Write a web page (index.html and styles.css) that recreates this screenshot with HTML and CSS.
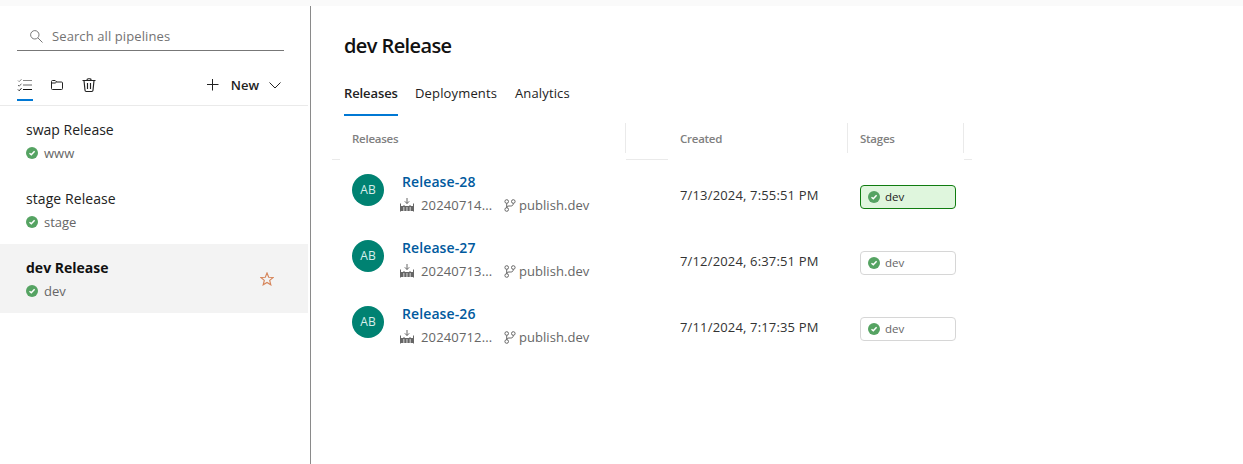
FILE: index.html
```html
<!DOCTYPE html>
<html lang="en">
<head>
<meta charset="utf-8">
<title>dev Release - Pipelines</title>
<link rel="stylesheet" href="styles.css">
</head>
<body>
<svg class="defs" width="0" height="0" aria-hidden="true">
  <symbol id="ok" viewBox="0 0 12 12"><circle cx="6" cy="6" r="6" fill="#55a362"/><path d="M3.500 6.200 5.300 7.800 8.600 4.300" fill="none" stroke="#fff" stroke-width="1.500"/></symbol>
  <symbol id="build" viewBox="0 0 14 14"><path d="M7 0v5.500M4.800 3.300 7 5.500l2.200-2.200M.5 5.500v8M13.500 5.500v8" fill="none" stroke="#666"/><path d="M0 8h3.500V7h1v1h5V7h1v1H14v5H0z" fill="#666"/><path d="M3 10h1.500M6.200 10h1.500M9.500 10H11M3 12h1.500M6.200 12h1.500M9.500 12H11" stroke="#fff"/></symbol>
  <symbol id="branch" viewBox="0 0 12 13"><g fill="none" stroke="#666" stroke-width="1"><circle cx="2.700" cy="2.500" r="1.800"/><circle cx="9.300" cy="2.500" r="1.800"/><circle cx="2.700" cy="10.500" r="1.800"/><path d="M2.700 4.300v4.400M9.300 4.300c0 2-1 2.700-2.600 2.700H5C3.500 7 2.700 7.700 2.700 8.700"/></g></symbol>
</svg>
<div class="topstrip"></div>
<div class="app">
  <aside class="sidebar">
    <div class="search">
      <svg width="13" height="13" viewBox="0 0 13 13" fill="none" stroke="#777"><circle cx="4.800" cy="4.800" r="4.200"/><path d="m7.900 7.900 4.600 4.600"/></svg>
      <span class="t-search">Search all pipelines</span>
    </div>
    <div class="toolbar">
      <span class="view active"><svg width="16" height="14" viewBox="0 0 16 14" fill="none"><path d="M6 2.500h9M1 2.500l1.200 1.200L4.500 1.200" stroke="#888"/><path d="M6 7h9M1 7l1.200 1.200L4.500 5.700" stroke="#666"/><path d="M6 11.500h9M1 11.500l1.200 1.200 2.300-2.500" stroke="#111"/></svg></span>
      <span class="view"><svg width="14" height="12" viewBox="0 0 14 12" fill="none" stroke="#222"><path d="M1.500 2.500q0-1 1-1h2.700l1.500 1.500h4.800q1 0 1 1v5.500q0 1-1 1h-9q-1 0-1-1zM1.500 4h3.700L6.700 3"/></svg></span>
      <span class="view"><svg width="14" height="15" viewBox="0 0 14 15" fill="none" stroke="#222" stroke-width="1.150"><path d="M.5 2.500h13M5 2.500V2q0-1.300 1.300-1.300h1.400Q9 .7 9 2v.5M2 2.500l1 9.800q.1 1.200 1.300 1.200h5.400q1.200 0 1.300-1.200l1-9.800M5.500 5v6M8.500 5v6"/></svg></span>
      <span class="new"><svg width="12" height="12" viewBox="0 0 12 12" stroke="#222"><path d="M5.500 0v11.500M0 5.500h11.500"/></svg><b class="t-new">New</b><svg width="12" height="7" viewBox="0 0 12 7" fill="none" stroke="#222"><path d="m.5.5 5.500 5.500L11.500.5"/></svg></span>
    </div>
    <div class="item"><div class="name">swap Release</div><div class="env"><svg width="12" height="12"><use href="#ok"/></svg><span>www</span></div></div>
    <div class="item"><div class="name wide">stage Release</div><div class="env"><svg width="12" height="12"><use href="#ok"/></svg><span>stage</span></div></div>
    <div class="item selected"><div><div class="name strong">dev Release</div><div class="env"><svg width="12" height="12"><use href="#ok"/></svg><span>dev</span></div></div>
      <svg width="14" height="14" viewBox="0 0 14 14" fill="none" stroke="#d6855a" stroke-width="1.150"><path d="m7 1 1.700 4.200 4.500.3-3.500 2.900 1.100 4.400L7 10.400l-3.800 2.400 1.100-4.400L.8 5.500l4.500-.3z"/></svg></div>
  </aside>
  <main class="main">
    <h1>dev Release</h1>
    <nav class="tabs"><span class="tab on">Releases</span><span class="tab dep">Deployments</span><span class="tab ana">Analytics</span></nav>
    <div class="grid head">
      <i class="rule"></i><div class="th">Releases</div><i class="rule"></i><div class="th">Created</div><div class="th">Stages</div><i class="rule"></i>
    </div>
    <div class="grid row">
      <div class="release"><span class="avatar">AB</span><div><div class="link">Release-28</div><div class="meta"><svg width="14" height="14"><use href="#build"/></svg><span class="num">20240714...</span><svg width="12" height="13"><use href="#branch"/></svg><span class="br">publish.dev</span></div></div></div>
      <div class="date"><span>7/13/2024, 7:55:51 PM</span></div>
      <div class="stage"><span class="pill current"><svg width="12" height="12"><use href="#ok"/></svg><span>dev</span></span></div>
    </div>
    <div class="grid row">
      <div class="release"><span class="avatar">AB</span><div><div class="link">Release-27</div><div class="meta"><svg width="14" height="14"><use href="#build"/></svg><span class="num">20240713...</span><svg width="12" height="13"><use href="#branch"/></svg><span class="br">publish.dev</span></div></div></div>
      <div class="date"><span>7/12/2024, 6:37:51 PM</span></div>
      <div class="stage"><span class="pill"><svg width="12" height="12"><use href="#ok"/></svg><span>dev</span></span></div>
    </div>
    <div class="grid row">
      <div class="release"><span class="avatar">AB</span><div><div class="link">Release-26</div><div class="meta"><svg width="14" height="14"><use href="#build"/></svg><span class="num">20240712...</span><svg width="12" height="13"><use href="#branch"/></svg><span class="br">publish.dev</span></div></div></div>
      <div class="date"><span>7/11/2024, 7:17:35 PM</span></div>
      <div class="stage"><span class="pill"><svg width="12" height="12"><use href="#ok"/></svg><span>dev</span></span></div>
    </div>
  </main>
</div>
</body>
</html>
```
FILE: styles.css
```css
* { box-sizing: border-box; }
body { margin: 0; height: 464px; overflow: hidden; display: flex; flex-direction: column; background: #fff; color: #222; font-family: "Open Sans", "Noto Sans", sans-serif; font-size: 13px; white-space: nowrap; }
svg { display: block; flex: none; }
.defs { display: none; }
.topstrip { height: 6px; background: #fafafa; flex: none; }
.app { display: flex; flex: 1; }
.sidebar { width: 311px; padding-right: 2px; border-right: 1px solid #8a8a8a; }
.search { display: flex; align-items: center; gap: 9px; width: 267px; height: 45px; margin-left: 17px; padding: 16px 0 0 13px; border-bottom: 1px solid #777; color: #737373; }
.t-search { font-size: 13px; letter-spacing: .1px; }
.toolbar { display: flex; height: 55px; padding: 18px 27px 0 17px; border-bottom: 1px solid #eaeaea; }
.view { display: flex; align-items: center; justify-content: center; width: 16px; height: 32px; margin-right: 16px; }
.view.active { border-bottom: 2px solid #0078d4; padding-top: 2px; }
.new { display: flex; align-items: center; height: 32px; margin-left: auto; gap: 12px; }
.t-new { font-size: 13px; font-weight: 600; margin-right: -2px; }
.item { height: 69px; padding: 14px 34px 0 26px; }
.name { height: 20px; line-height: 20px; font-size: 14px; }
.name.wide { letter-spacing: .08px; }
.env { display: flex; align-items: center; gap: 6px; height: 20px; margin-top: 3px; font-size: 13px; color: #666; }
.selected { display: flex; align-items: center; justify-content: space-between; padding-top: 1px; background: #f3f3f3; }
.strong { font-weight: 700; color: #111; }
.main { flex: 1; padding-left: 21px; }
h1 { margin: 0; padding: 24px 0 0 12px; height: 71px; font-size: 20px; line-height: 31px; font-weight: 600; letter-spacing: -.6px; color: #111; }
.tabs { display: flex; gap: 17px; height: 40px; padding-left: 12px; }
.tab { padding-top: 6px; line-height: 20px; height: 39px; font-size: 13px; }
.tab.on { width: 54px; font-weight: 600; letter-spacing: -.1px; border-bottom: 2px solid #0078d4; }
.dep { width: 83px; letter-spacing: .15px; }
.ana { letter-spacing: .14px; }
.head { grid-template-columns: 8px 286px 42px 180px 116px 8px; width: 640px; height: 43px; padding-top: 6px; }
.grid { display: grid; }
.rule { height: 37px; border-bottom: 1px solid #eaeaea; }
.th { height: 30px; border-right: 1px solid #eaeaea; padding-left: 12px; line-height: 32px; font-size: 11.5px; font-weight: 600; letter-spacing: -.25px; color: #808080; }
.row { grid-template-columns: 328px 180px 124px; margin-left: 8px; height: 66px; }
.release { display: flex; gap: 18px; padding: 14px 0 0 12px; }
.avatar { display: flex; align-items: center; justify-content: center; width: 32px; height: 32px; padding-bottom: 1px; border-radius: 50%; background: #008272; color: #d9eeeb; font-size: 12px; }
.link { height: 16px; line-height: 16px; font-size: 14px; font-weight: 600; letter-spacing: .1px; color: #005a9e; }
.meta { display: flex; align-items: center; height: 20px; margin: 5px 0 0 -2px; color: #666; }
.num { width: 71px; margin: 0 12px 0 7px; letter-spacing: .15px; }
.br { margin-left: 3px; letter-spacing: .05px; }
.date { padding: 25px 0 0 12px; line-height: 20px; letter-spacing: .16px; color: #333; }
.stage { padding: 25px 0 0 12px; }
.pill { display: flex; align-items: center; gap: 5px; width: 96px; height: 24px; padding-left: 7px; border: 1px solid #d6d6d6; border-radius: 4px; font-size: 11.5px; color: #666; }
.pill span { padding-bottom: 2px; }
.current { background: #dff6dd; border-color: #107c10; color: #222; }
```
